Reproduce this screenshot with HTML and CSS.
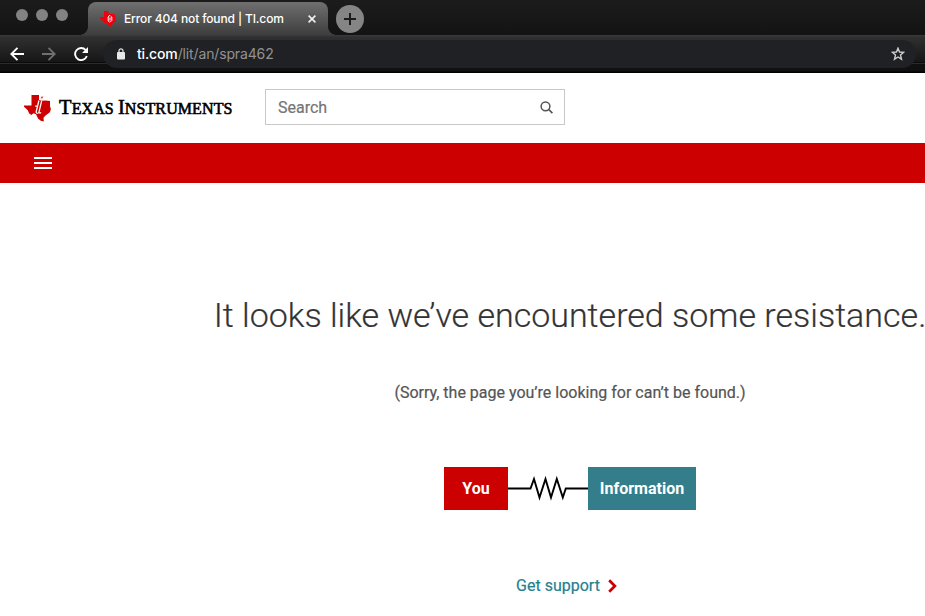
FILE: index.html
```html
<!DOCTYPE html>
<html lang="en">
<head>
<meta charset="utf-8">
<title>Error 404 not found | TI.com</title>
<link rel="stylesheet" href="styles.css">
</head>
<body>
<div class="tabstrip">
  <div class="lights"><i></i><i></i><i></i></div>
  <div class="tab">
    <svg class="favicon" width="16" height="16" viewBox="0 0 16 16"><path d="M4 0h4.500v2.500l3.500.6 3 .2.500 3.700.5 3-3.500 2.400-1 3.600-2.500-1-2.500-3.500-2 .8-1.500-2.400L0 7.400V6h4z" fill="#f0000c"/><path d="M9.800 4 8.200 6v4l1.600 1.300M10.500 5l1.300 1v3.500l-1.500 1.500M10 6.500v3" fill="none" stroke="#fff" stroke-width="1"/></svg>
    <span class="tab-title">Error 404 not found | TI.com</span>
    <svg class="close" width="8" height="8" viewBox="0 0 8 8"><path d="M.6.6l6.800 6.800M7.400.6.6 7.400" stroke="#f1f1f1" stroke-width="1.600"/></svg>
  </div>
  <div class="newtab"><svg width="12" height="12" viewBox="0 0 12 12"><path d="M6 0v12M0 6h12" stroke="#1b1b1b" stroke-width="2"/></svg></div>
</div>
<div class="toolbar">
  <svg class="nav" width="14" height="14" viewBox="0 0 14 14"><path d="M14 7H1.500M7.500 .8 1.300 7l6.200 6.200" fill="none" stroke="#fff" stroke-width="1.900"/></svg>
  <svg class="nav" width="14" height="14" viewBox="0 0 14 14"><path d="M0 7h12.500M6.500.8 12.700 7l-6.200 6.200" fill="none" stroke="#707070" stroke-width="1.800"/></svg>
  <svg class="nav" width="14" height="14" viewBox="0 0 14 14"><path d="M11.700 3.200A6 6 0 1 0 12.800 9" fill="none" stroke="#fff" stroke-width="1.900"/><path d="M14 0v6H8z" fill="#fff"/></svg>
  <div class="address">
    <svg width="8" height="12" viewBox="0 0 8 12"><rect y="4" width="8" height="7.500" rx="1" fill="#e8e8e8"/><path d="M2 4.500V2.800a2 2 0 0 1 4 0v1.700" fill="none" stroke="#e8e8e8" stroke-width="1.200"/></svg>
    <span class="url"><b>ti.com</b>/lit/an/spra462</span>
    <svg class="star" width="14" height="14" viewBox="0 0 14 14"><path d="M7 1.200 8.500 5l4.200.3-3.200 2.700 1 4.200L7 10l-3.500 2.200 1-4.200L1.300 5.300 5.500 5z" fill="none" stroke="#cfcfcf" stroke-width="1.400"/></svg>
  </div>
</div>
<header class="header">
  <svg class="logo" width="27" height="28" viewBox="0 0 27 28"><path d="M7.500 1H15v5l2.500.7 4-.2 4.500.6v5l.9 3.200-1 2.900-4.400 3.300-2 2.300.3 3.700-3-.8-2.800-2.200-2-4.300-2.500-1-2.200 1.700-2.300-1.700-1.200-3L0 12.800v-1.300h7.500z" fill="#c00"/><path d="m17 3.500.4-1.300h1.900l-.6 2.500h-2z" fill="#c00" stroke="#fff" stroke-width=".7"/><path d="m14.900 6.500-1.300 5.700h-2.400M13.600 12.200l-1.400 5.300q-.2 1.800 1.600 1.800M17.600 7.200l-2.800 11.600h2.400" fill="none" stroke="#fff" stroke-width="1.300"/></svg>
  <div class="wordmark"><span>T</span>EXAS <span>I</span>NSTRUMENTS</div>
  <div class="search"><span>Search</span><svg width="13" height="13" viewBox="0 0 13 13"><circle cx="5.500" cy="5.300" r="4.400" fill="none" stroke="#555" stroke-width="1.500"/><path d="m8.700 8.500 3.700 3.700" stroke="#555" stroke-width="1.700"/></svg></div>
</header>
<nav class="menu"><div class="burger"><i></i><i></i><i></i></div></nav>
<main class="content">
  <h1>It looks like we’ve encountered some resistance.</h1>
  <p>(Sorry, the page you’re looking for can’t be found.)</p>
  <div class="circuit">
    <div class="node you">You</div>
    <svg width="80" height="43" viewBox="0 0 80 43"><path d="M0 21.500h22.500L26 12l5.500 18.500L37.500 12l5.500 18.500L48.800 12l6 18.500 3-9H80" fill="none" stroke="#000" stroke-width="1.900"/></svg>
    <div class="node info">Information</div>
  </div>
  <a class="support"><span>Get support</span><svg width="9" height="14" viewBox="0 0 9 14"><path d="m1.200 1.200 5.700 5.800-5.700 5.800" fill="none" stroke="#c00" stroke-width="2.700"/></svg></a>
</main>
</body>
</html>
```
FILE: styles.css
```css
* { box-sizing: border-box; }
html { overflow: hidden; }
body { margin: 0; width: 925px; height: 616px; overflow: hidden; background: #fff; font-family: Roboto, sans-serif; }
svg { display: block; flex: none; }
.tabstrip { display: flex; height: 35px; background: linear-gradient(#1c1c1c, #131313); }
.lights { display: flex; gap: 8px; width: 88px; padding: 9px 0 0 16px; }
.lights i { width: 12px; height: 12px; border-radius: 50%; background: #838383; }
.tab { position: relative; display: flex; align-items: center; width: 240px; height: 33px; margin-top: 2px; padding-left: 12px; border-radius: 8px 8px 0 0; background: linear-gradient(#707070, #3d3d3d); }
.tab::before, .tab::after { content: ""; position: absolute; bottom: 0; width: 8px; height: 8px; }
.tab::before { left: -8px; background: radial-gradient(circle at 0 0, transparent 7.5px, #404040 8px); }
.tab::after { right: -8px; background: radial-gradient(circle at 100% 0, transparent 7.5px, #404040 8px); }
.favicon { margin-top: 1px; }
.tab-title { width: 184px; margin-left: 8px; color: #fff; font: 500 12px/16px Inter, sans-serif; letter-spacing: -.13px; white-space: nowrap; }
.newtab { display: flex; align-items: center; justify-content: center; width: 28px; height: 28px; margin: 5px 0 0 8px; border-radius: 50%; background: #858585; }
.toolbar { display: flex; align-items: center; height: 38px; padding-left: 10px; background: linear-gradient(#3c3c3c 0, #303030 2px, #161616 27px, #000 28px, #2b2b2b 28px, #2b2b2b 29px, #101010 29px, #101010 36px, #000 37px); }
.nav { margin-right: 18px; }
.address { display: flex; align-items: center; width: 813px; height: 28px; margin-left: -3px; padding: 0 11px 0 14px; border-radius: 14px; background: #202124; }
.url { margin-left: 12px; color: #929292; font: 400 14px/20px Inter, sans-serif; letter-spacing: -.14px; }
.url b { color: #fff; font-weight: 500; }
.star { margin-left: auto; }
.header { display: flex; align-items: center; height: 70px; padding: 0 0 2px 24px; }
.logo { margin-top: 2px; }
.wordmark { width: 174px; margin: 2px 32px 0 8px; color: #000; font: 400 16px/24px "Liberation Serif", serif; letter-spacing: .1px; white-space: nowrap; -webkit-text-stroke: .6px #000; }
.wordmark span { font-size: 20.5px; }
.search { display: flex; align-items: center; justify-content: space-between; width: 300px; height: 36px; padding: 0 11px 0 12px; border: 1px solid #c9c9c9; color: #757575; font-size: 16px; -webkit-text-stroke: .2px #757575; }
.menu { height: 40px; padding: 14px 34px; background: #c00; }
.burger { display: flex; flex-direction: column; gap: 3px; width: 18px; }
.burger i { height: 2px; background: #fff; }
.content { display: flex; flex-direction: column; align-items: center; height: 433px; padding: 108px 0 0 215px; }
h1 { margin: 0; color: #333; font-size: 34px; line-height: 48px; font-weight: 300; white-space: nowrap; -webkit-text-stroke: .2px #333; }
p { margin: 42px 0 0; color: #555; font-size: 16px; line-height: 24px; -webkit-text-stroke: .2px #555; }
.circuit { display: flex; height: 43px; margin-top: 62px; }
.node { display: flex; align-items: center; justify-content: center; height: 43px; color: #fff; font-size: 16px; font-weight: 700; }
.you { width: 64px; background: #c00; }
.info { width: 108px; background: #347d8b; }
.support { display: flex; align-items: center; gap: 8px; margin: 64px 7px 0 0; color: #278090; font-size: 16px; line-height: 24px; -webkit-text-stroke: .2px #278090; }
```
